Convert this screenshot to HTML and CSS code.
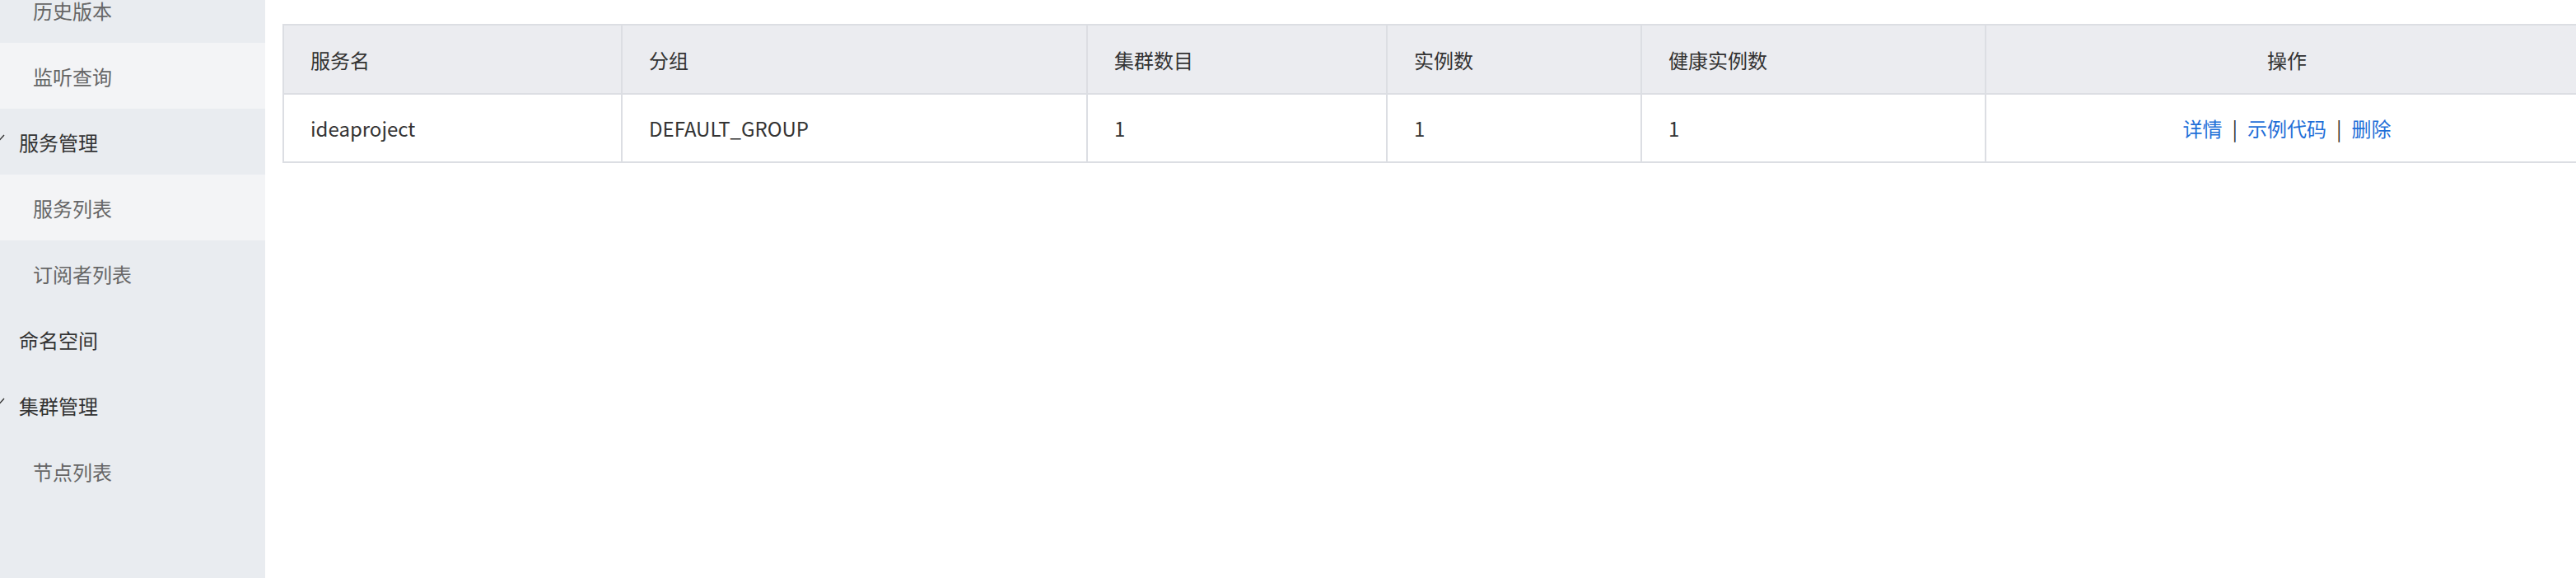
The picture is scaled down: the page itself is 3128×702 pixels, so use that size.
FILE: index.html
```html
<!DOCTYPE html>
<html lang="zh-CN">
<head>
<meta charset="utf-8">
<title>服务列表</title>
<link rel="stylesheet" href="styles.css">
</head>
<body>
<div class="layout">
  <aside class="sidebar">
    <ul class="menu">
      <li class="item sub">历史版本</li>
      <li class="item sub light">监听查询</li>
      <li class="item group"><svg class="caret" viewBox="0 0 12 8" width="12" height="8"><path d="M1 1 L6 6.5 L11 1" fill="none" stroke="#333" stroke-width="1.4"/></svg><span>服务管理</span></li>
      <li class="item sub light">服务列表</li>
      <li class="item sub">订阅者列表</li>
      <li class="item top">命名空间</li>
      <li class="item group"><svg class="caret" viewBox="0 0 12 8" width="12" height="8"><path d="M1 1 L6 6.5 L11 1" fill="none" stroke="#333" stroke-width="1.4"/></svg><span>集群管理</span></li>
      <li class="item sub">节点列表</li>
    </ul>
  </aside>
  <main class="content">
    <table class="grid">
      <colgroup>
        <col class="c1"><col class="c2"><col class="c3"><col class="c4"><col class="c5"><col class="c6">
      </colgroup>
      <thead>
        <tr>
          <th>服务名</th>
          <th>分组</th>
          <th>集群数目</th>
          <th>实例数</th>
          <th>健康实例数</th>
          <th class="center">操作</th>
        </tr>
      </thead>
      <tbody>
        <tr>
          <td>ideaproject</td>
          <td>DEFAULT_GROUP</td>
          <td>1</td>
          <td>1</td>
          <td>1</td>
          <td class="center"><a class="link">详情</a><span class="sep">|</span><a class="link">示例代码</a><span class="sep">|</span><a class="link">删除</a></td>
        </tr>
      </tbody>
    </table>
  </main>
</div>
</body>
</html>
```

FILE: styles.css
```css
html, body {
  margin: 0;
  padding: 0;
  background: #ffffff;
  overflow: hidden;
}

body {
  font-family: "Noto Sans CJK SC", "Noto Sans", sans-serif;
  font-size: 24px;
  color: #333333;
}

.layout {
  display: flex;
  height: 702px;
  width: 3200px;
}

.sidebar {
  width: 322px;
  flex-shrink: 0;
  background: #e9ecf0;
  overflow: hidden;
}

.menu {
  list-style: none;
  margin: -28px 0 0 0;
  padding: 0;
}

.item {
  height: 80px;
  display: flex;
  align-items: center;
  white-space: nowrap;
}

.item.light {
  background: #f3f4f6;
}

.item.sub {
  padding-left: 40px;
  color: #666666;
}

.item.top {
  padding-left: 23px;
  color: #333333;
}

.item.group {
  color: #333333;
}

.caret {
  margin-left: -6px;
  margin-right: 17px;
  margin-top: -10px;
  flex-shrink: 0;
}

.content {
  flex: 1;
  padding: 29px 0 0 21px;
}

.grid {
  border-collapse: separate;
  border-spacing: 0;
  table-layout: fixed;
  width: 2801px;
  border-top: 2px solid #dcdee3;
  border-left: 2px solid #dcdee3;
}

.c1 { width: 411px; }
.c2 { width: 565px; }
.c3 { width: 364px; }
.c4 { width: 309px; }
.c5 { width: 418px; }
.c6 { width: 732px; }

.grid th,
.grid td {
  border-right: 2px solid #dcdee3;
  border-bottom: 2px solid #dcdee3;
  padding: 0 32px;
  text-align: left;
  vertical-align: middle;
  font-weight: normal;
  color: #333333;
  white-space: nowrap;
}

.grid th {
  height: 82px;
  background: #ebecf0;
}

.grid td {
  height: 81px;
  background: #ffffff;
}

.grid .center {
  text-align: center;
}

.link {
  color: #1f6fd8;
  text-decoration: none;
  cursor: pointer;
}

.sep {
  margin: 0 12px;
  color: #333333;
}
```
